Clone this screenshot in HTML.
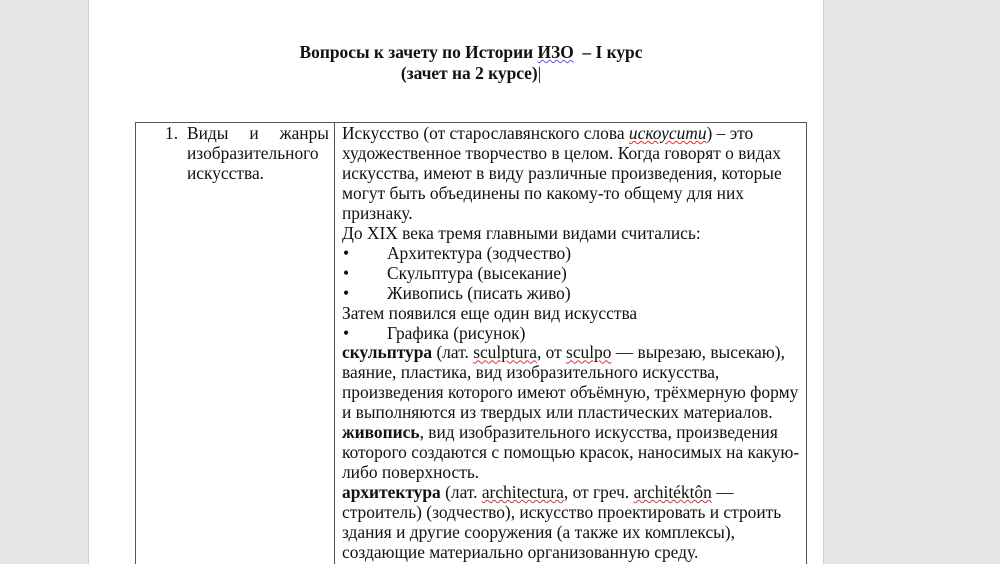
<!DOCTYPE html><html><head><meta charset="utf-8"><style>
html,body{margin:0;width:1000px;height:564px;overflow:hidden}
body{background:#e6e6e6;font-family:"Liberation Serif",serif;font-size:17.4px;color:#111;position:relative}
.page{position:absolute;left:88px;top:0;width:734px;height:564px;background:#fff;border-left:1px solid #d0d0d0;border-right:1px solid #d0d0d0}
.t{position:absolute;text-align:center;font-weight:bold;line-height:21px}
.tbl{position:absolute;left:135px;top:122px;width:670px;height:460px;border:1px solid #555;border-bottom:none}
.col{position:absolute;left:198px;top:0;bottom:0;border-left:1px solid #555}
.r{position:absolute;left:206px;top:1px;line-height:19.95px;white-space:nowrap}
.l{position:absolute;left:51px;top:1px;width:142px;line-height:19.95px}
.b{position:relative;padding-left:45px}
.b:before{content:"•";position:absolute;left:1px}
.u{text-decoration:underline wavy #d33;text-decoration-thickness:1px}
</style></head><body>
<div class="page"></div>
<div class="t" style="top:42px;left:88px;width:766px">Вопросы к зачету по Истории <span style="text-decoration:underline wavy #55f;text-decoration-thickness:1px">ИЗО</span>&nbsp; – I курс</div>
<div class="t" style="top:63px;left:88px;width:766px">(зачет на 2 курсе)<span style="font-weight:normal">|</span></div>
<div class="tbl"><div class="col"></div>
<div class="l"><span style="position:absolute;left:-22px">1.</span><div style="text-align:justify;text-align-last:justify">Виды и жанры</div>изобразительного<br>искусства.</div>
<div class="r">Искусство (от старославянского слова <i class="u">искоусити</i>) – это<br>художественное творчество в целом. Когда говорят о видах<br>искусства, имеют в виду различные произведения, которые<br>могут быть объединены по какому-то общему для них<br>признаку.<br>До XIX века тремя главными видами считались:
<div class="b">Архитектура (зодчество)</div><div class="b">Скульптура (высекание)</div><div class="b">Живопись (писать живо)</div>Затем появился еще один вид искусства<div class="b">Графика (рисунок)</div><b>скульптура</b> (лат. <span class="u">sculptura</span>, от <span class="u">sculpo</span> — вырезаю, высекаю),<br>ваяние, пластика, вид изобразительного искусства,<br>произведения которого имеют объёмную, трёхмерную форму<br>и выполняются из твердых или пластических материалов.<br><b>живопись</b>, вид изобразительного искусства, произведения<br>которого создаются с помощью красок, наносимых на какую-<br>либо поверхность.<br><b>архитектура</b> (лат. <span class="u">architectura</span>, от греч. <span class="u">architéktôn</span> —<br>строитель) (зодчество), искусство проектировать и строить<br>здания и другие сооружения (а также их комплексы),<br>создающие материально организованную среду.</div>
</div>
</body></html>
